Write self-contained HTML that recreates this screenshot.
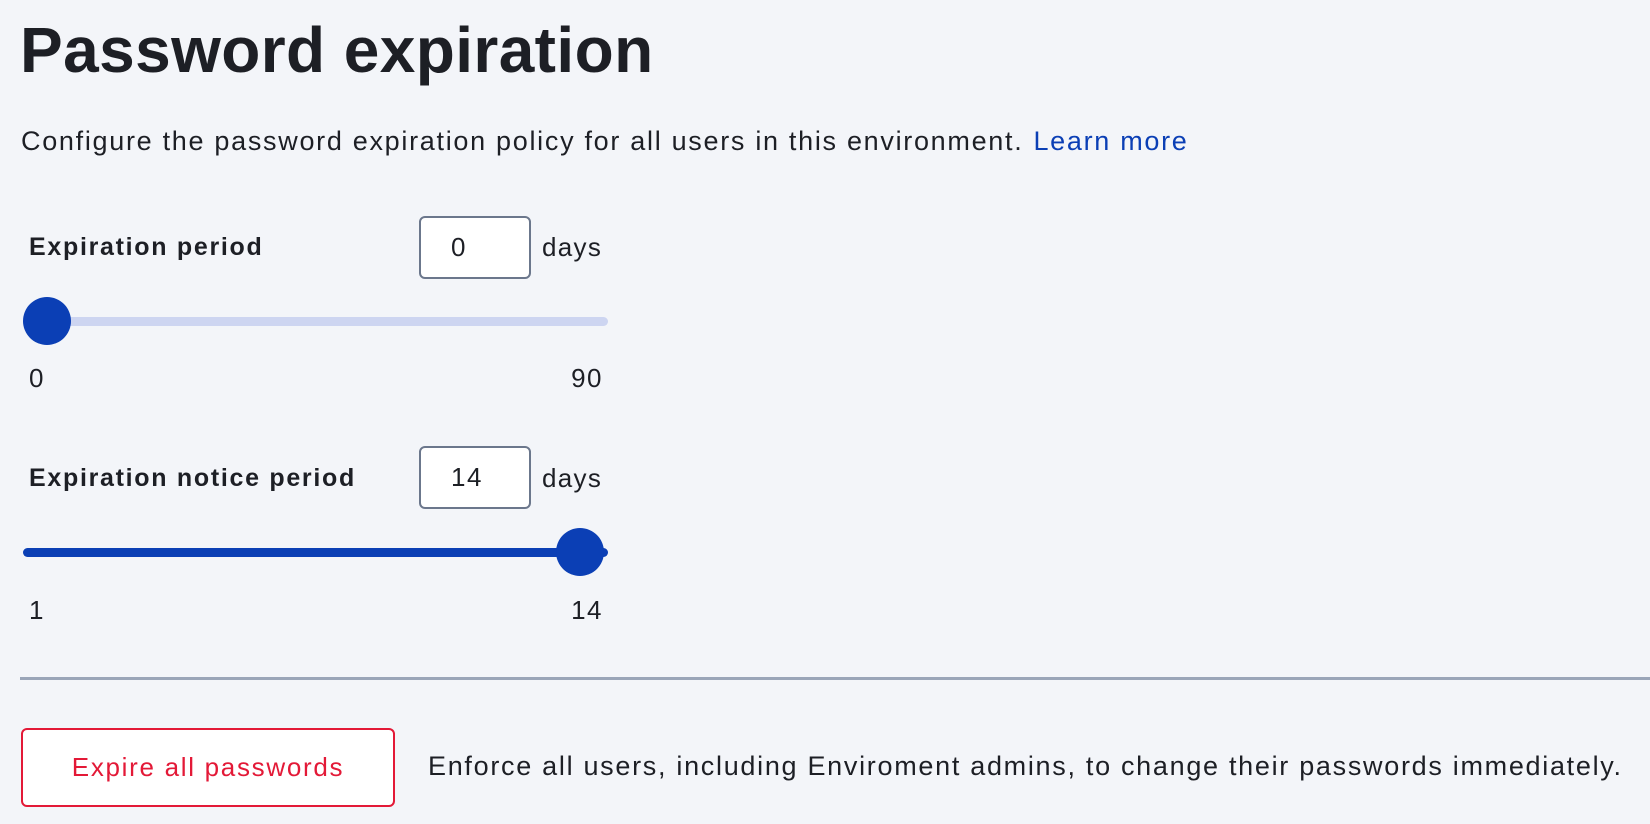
<!DOCTYPE html>
<html><head><meta charset="utf-8"><style>
html,body{margin:0;padding:0;background:#f3f5f9;width:1650px;height:824px;overflow:hidden;font-family:"Liberation Sans",sans-serif;color:#1d1f25}
.a{position:absolute;white-space:nowrap}
h1{position:absolute;left:20px;top:13px;margin:0;font-size:64px;font-weight:bold;letter-spacing:0.4px}
.desc{left:21px;top:126px;font-size:27px;letter-spacing:1.7px}
.desc span{color:#0b3fb5;margin-left:10px}
.lbl{font-size:25px;font-weight:bold;left:29px;letter-spacing:1.7px}
.inp{position:absolute;left:419px;width:112px;height:63px;border:2px solid #6b778c;border-radius:6px;background:#fff;box-sizing:border-box;font-size:26px;line-height:59px;padding-left:30px;letter-spacing:1.5px}
.days{left:542px;font-size:26px;letter-spacing:1.3px}
.track{position:absolute;left:23px;width:585px;height:9px;border-radius:5px}
.thumb{position:absolute;width:48px;height:48px;border-radius:50%;background:#0b3fb5}
.num{font-size:26px;letter-spacing:1.5px}
.r{right:1047px;text-align:right}
</style></head><body>
<h1>Password expiration</h1>
<div class="a desc">Configure the password expiration policy for all users in this environment.<span>Learn more</span></div>

<div class="a lbl" style="top:233px">Expiration period</div>
<div class="inp" style="top:216px">0</div>
<div class="a days" style="top:232px">days</div>
<div class="track" style="top:317px;background:#cdd5f1"></div>
<div class="thumb" style="left:23px;top:297px"></div>
<div class="a num" style="left:29px;top:363px">0</div>
<div class="a num r" style="top:363px">90</div>

<div class="a lbl" style="top:464px">Expiration notice period</div>
<div class="inp" style="top:446px">14</div>
<div class="a days" style="top:463px">days</div>
<div class="track" style="top:548px;background:#0b3fb5"></div>
<div class="thumb" style="left:556px;top:528px"></div>
<div class="a num" style="left:29px;top:595px">1</div>
<div class="a num r" style="top:595px">14</div>

<div style="position:absolute;left:20px;right:0;top:677px;height:3px;background:#9aa5b8"></div>

<div style="position:absolute;left:21px;top:728px;width:374px;height:79px;border:2px solid #e31937;border-radius:6px;box-sizing:border-box;background:#fff;color:#e31937;font-size:26px;text-align:center;line-height:75px;letter-spacing:1.7px">Expire all passwords</div>
<div class="a" style="left:428px;top:751px;font-size:27px;letter-spacing:1.7px">Enforce all users, including Enviroment admins, to change their passwords immediately.</div>
</body></html>
